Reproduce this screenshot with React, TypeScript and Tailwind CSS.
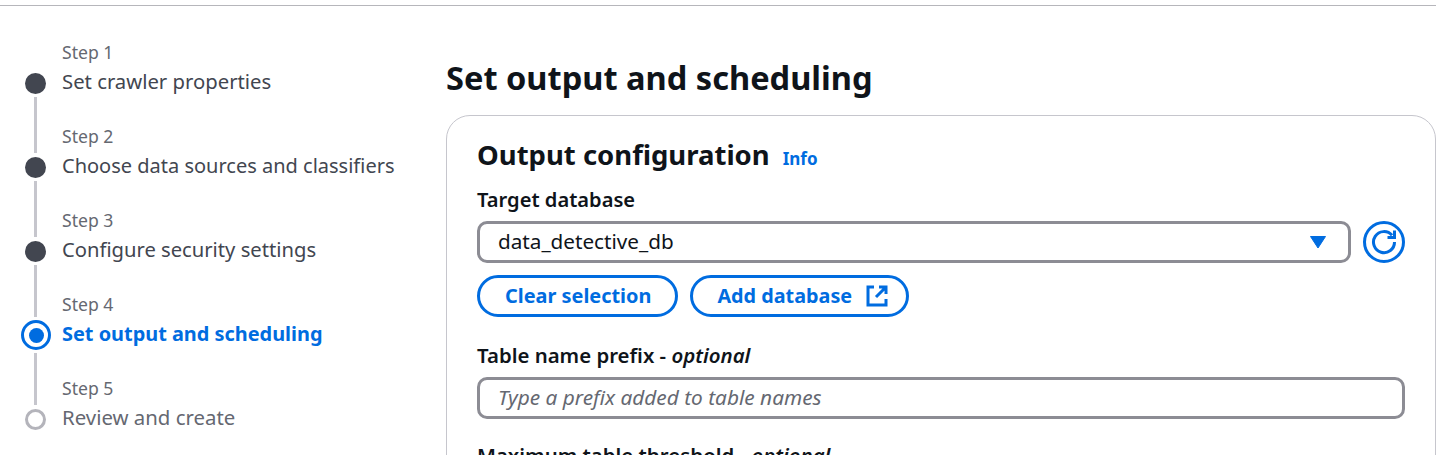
const steps = [
  { n: 1, title: "Set crawler properties", titleClass: "pb-[4px] text-[20.3px] text-[#424650]" },
  { n: 2, title: "Choose data sources and classifiers", titleClass: "pb-[3px] text-[20px] text-[#424650]" },
  { n: 3, title: "Configure security settings", titleClass: "pb-[4px] text-[20.2px] text-[#424650]" },
  { n: 4, title: "Set output and scheduling", titleClass: "pb-[3px] text-[19.9px] font-bold text-[#006ce0]" },
  { n: 5, title: "Review and create", titleClass: "pb-[4px] text-[20.4px] text-[#656871]" },
];

function Dot({ n }: { n: number }) {
  if (n === 4)
    return (
      <span className="ml-[21px] -my-[1px] flex h-[30px] w-[30px] items-center justify-center rounded-full border-[3px] border-[#006ce0]">
        <span className="h-[15px] w-[15px] rounded-full bg-[#006ce0]" />
      </span>
    );
  if (n === 5)
    return <span className="ml-[25px] h-[21px] w-[21px] rounded-full border-[3px] border-[#b4b4bb]" />;
  return <span className="ml-[25px] h-[21px] w-[21px] rounded-full bg-[#424650]" />;
}

function Stepper() {
  return (
    <ol className="w-[446px] shrink-0 pt-[7px]">
      {steps.map((s, i) => {
        let line = "h-[56px]";
        if (s.n === 4) line = "h-[52px] mb-[4px]";
        if (s.n === 5) line = "h-[52px] mt-[4px]";
        return (
          <li key={s.n}>
            <div className="flex h-[56px]">
              <div className="w-[62px] shrink-0">
                {i > 0 && <div className={`ml-[34px] w-[3px] bg-[#c6c6cd] ${line}`} />}
              </div>
              <div className="self-end pb-[5px] text-[17.6px] leading-[24px] text-[#656871]">Step {s.n}</div>
            </div>
            <div className="flex h-[28px] items-center">
              <div className="flex w-[62px] shrink-0 items-center">
                <Dot n={s.n} />
              </div>
              <div className={`leading-[28px] ${s.titleClass}`}>{s.title}</div>
            </div>
          </li>
        );
      })}
    </ol>
  );
}

function Caret() {
  return (
    <svg viewBox="0 0 16 14" className="h-[14px] w-[16px]" aria-hidden="true">
      <path d="M0.5 1.5 H15.5 L8 13 Z" fill="#006ce0" stroke="#006ce0" strokeLinejoin="round" />
    </svg>
  );
}

function Refresh() {
  return (
    <svg viewBox="0 0 26 26" className="h-[26px] w-[26px]" fill="none" stroke="#006ce0" strokeWidth="3" aria-hidden="true">
      <path d="M23.5 13 A10.5 10.5 0 1 1 21 6.3" />
      <path d="M23.5 1.5 V8.5 H16.5" />
    </svg>
  );
}

function External() {
  return (
    <svg viewBox="0 0 22 22" className="h-[22px] w-[22px]" fill="none" stroke="#006ce0" strokeWidth="3" aria-hidden="true">
      <path d="M8 2 H2 V20 H20 V14" />
      <path d="M13 2 H20 V9 M20 2 L10 12" />
    </svg>
  );
}

export default function App() {
  return (
    <div className="h-[455px] overflow-hidden bg-white font-['Noto_Sans',sans-serif] text-[#0f141a]">
      <div className="h-[6px] border-b border-[#b6b6bb]" />
      <div className="flex">
        <Stepper />
        <main className="min-w-0 flex-1">
          <h1 className="mt-[50px] text-[32.6px] font-bold leading-[44px]">Set output and scheduling</h1>
          <section className="mt-[15px] h-[400px] rounded-tl-[24px] rounded-tr-[24px] border border-[#c6c6cd] pl-[30px] pr-[30px]">
            <div className="flex items-baseline gap-[13px] pt-[19px]">
              <h2 className="text-[27.5px] font-bold leading-[40px]">Output configuration</h2>
              <a className="text-[17px] font-bold leading-[24px] text-[#006ce0]">Info</a>
            </div>
            <div className="mt-[13px] text-[20.1px] font-semibold leading-[24px]">Target database</div>
            <div className="mt-[9px] flex items-center gap-[12px]">
              <div className="flex h-[42px] flex-1 items-center justify-between rounded-[10px] border-[3px] border-[#8c8c94] pl-[18px] pr-[22px] text-[20.7px]">
                <span>data_detective_db</span>
                <Caret />
              </div>
              <button className="flex h-[42px] w-[42px] items-center justify-center rounded-full border-[3px] border-[#006ce0]">
                <Refresh />
              </button>
            </div>
            <div className="mt-[12px] flex gap-[12px]">
              <button className="h-[42px] rounded-full border-[3px] border-[#006ce0] pl-[25px] pr-[24px] text-[19.9px] font-bold text-[#006ce0]">
                Clear selection
              </button>
              <button className="flex h-[42px] items-center gap-[14px] rounded-full border-[3px] border-[#006ce0] pl-[24px] pr-[18px] text-[19.8px] font-bold text-[#006ce0]">
                Add database
                <External />
              </button>
            </div>
            <div className="mt-[26px] text-[20.4px] font-semibold leading-[24px]">
              Table name prefix - <em className="font-semibold">optional</em>
            </div>
            <input
              className="mt-[10px] block h-[42px] w-full rounded-[10px] border-[3px] border-[#8c8c94] pb-[2px] pl-[18px] text-[20.8px] outline-none placeholder:italic placeholder:text-[#656871]"
              placeholder="Type a prefix added to table names"
            />
            <div className="mt-[24px] text-[20.4px] font-semibold leading-[24px]">
              Maximum table threshold - <em className="font-semibold">optional</em>
            </div>
          </section>
        </main>
      </div>
    </div>
  );
}
